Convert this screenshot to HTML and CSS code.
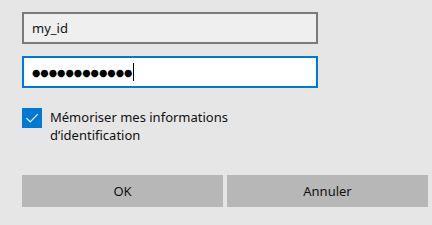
FILE: index.html
```html
<!DOCTYPE html>
<html lang="fr">
<head>
    <meta charset="UTF-8">
    <title>Identification</title>
    <link rel="stylesheet" href="styles.css">
</head>
<body>
    <section class="login">
        <div class="campo">my_id</div>
        <div class="campo ativo"><span class="pontos">●●●●●●●●●●●●</span><span class="cursor"></span></div>
        <div class="lembrar">
            <span class="caixa">
                <svg width="20" height="20" viewBox="0 0 20 20"><path d="M4.5 10.2 L8.2 13.9 L15.8 6.1" fill="none" stroke="#fff" stroke-width="1.2"/></svg>
            </span>
            <span class="rotulo">Mémoriser mes informations<br>d’identification</span>
        </div>
        <div class="botoes">
            <div class="botao">OK</div>
            <div class="botao">Annuler</div>
        </div>
    </section>
</body>
</html>
```
FILE: styles.css
```css
body {
    margin: 0;
    background-color: #e6e6e6;
    font-family: "Noto Sans", "Open Sans", sans-serif;
    font-size: 13px;
    color: #111;
}

.login {
    padding: 12px 0 0 22px;
    display: flex;
    flex-direction: column;
}

.campo {
    box-sizing: border-box;
    width: 296px;
    height: 32px;
    border: 2px solid #7a7a7a;
    background-color: #efefef;
    padding: 0 8px;
    display: flex;
    align-items: center;
}

.campo.ativo {
    margin-top: 12px;
    border-color: #0078d7;
    background-color: #fff;
}

.pontos {
    font-family: "DejaVu Sans", sans-serif;
    font-size: 9.6px;
    letter-spacing: 0;
    color: #000;
}

.cursor {
    display: inline-block;
    width: 1px;
    height: 18px;
    background-color: #000;
    margin-left: 1px;
}

.lembrar {
    margin-top: 20px;
    display: flex;
    align-items: flex-start;
}

.caixa {
    width: 20px;
    height: 20px;
    background-color: #0078d7;
    flex: none;
}

.caixa svg {
    display: block;
}

.rotulo {
    margin-left: 8px;
    line-height: 18px;
    margin-top: 0;
}

.botoes {
    margin-top: 31px;
    display: flex;
    gap: 4px;
}

.botao {
    width: 201px;
    height: 32px;
    background-color: #b7b7b7;
    display: flex;
    align-items: center;
    justify-content: center;
}
```
